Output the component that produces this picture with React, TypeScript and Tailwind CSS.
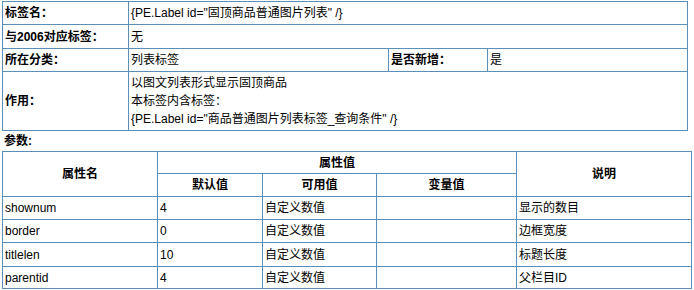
import React from "react";

const font = { fontFamily: '"Liberation Sans", Tahoma, "Noto Sans CJK SC", sans-serif' };

function Cell({
  children,
  className = "",
}: {
  children?: React.ReactNode;
  className?: string;
}) {
  return (
    <div className={"bg-white flex items-center pl-[2px] text-[12px] leading-[18px] text-black " + className}>
      {children}
    </div>
  );
}

function Label({ children, className = "" }: { children: React.ReactNode; className?: string }) {
  return <Cell className={"font-bold " + className}>{children}</Cell>;
}

function Head({ children, className = "" }: { children: React.ReactNode; className?: string }) {
  return (
    <div className={"bg-white flex items-center justify-center text-[12px] font-bold text-black " + className}>
      {children}
    </div>
  );
}

const rows = [
  ["shownum", "4", "自定义数值", "", "显示的数目"],
  ["border", "0", "自定义数值", "", "边框宽度"],
  ["titlelen", "10", "自定义数值", "", "标题长度"],
  ["parentid", "4", "自定义数值", "", "父栏目ID"],
];
const rowH = ["h-[22px]", "h-[22px]", "h-[23px]", "h-[21px]"];

export default function App() {
  return (
    <div className="w-[694px] h-[290px] bg-white pl-[2px] pt-[1px]" style={font}>
      <div className="grid w-[686px] grid-cols-[125px_259px_98px_199px] grid-rows-[22px_23px_22px_58px] gap-px bg-[#5b8fb9] p-px">
        <Label>标签名：</Label>
        <Cell className="col-span-3">{'{PE.Label id="固顶商品普通图片列表" /}'}</Cell>
        <Label>与2006对应标签：</Label>
        <Cell className="col-span-3">无</Cell>
        <Label>所在分类：</Label>
        <Cell>列表标签</Cell>
        <Label>是否新增：</Label>
        <Cell>是</Cell>
        <Label>作用：</Label>
        <Cell className="col-span-3">
          <div className="flex flex-col">
            <span>以图文列表形式显示固顶商品</span>
            <span>本标签内含标签：</span>
            <span>{'{PE.Label id="商品普通图片列表标签_查询条件" /}'}</span>
          </div>
        </Cell>
      </div>
      <div className="h-[20px] flex items-center pl-[2px] text-[12px] font-bold text-black">参数:</div>
      <div className="grid w-[690px] grid-cols-[154px_104px_113px_139px_174px] grid-rows-[21px_22px_22px_22px_23px_21px] gap-px bg-[#5b8fb9] p-px">
        <Head className="row-span-2">属性名</Head>
        <Head className="col-span-3">属性值</Head>
        <Head className="row-span-2">说明</Head>
        <Head>默认值</Head>
        <Head>可用值</Head>
        <Head>变量值</Head>
        {rows.map((r, i) =>
          r.map((c, j) => (
            <Cell key={i + "-" + j} className={rowH[i]}>
              {c}
            </Cell>
          ))
        )}
      </div>
    </div>
  );
}
